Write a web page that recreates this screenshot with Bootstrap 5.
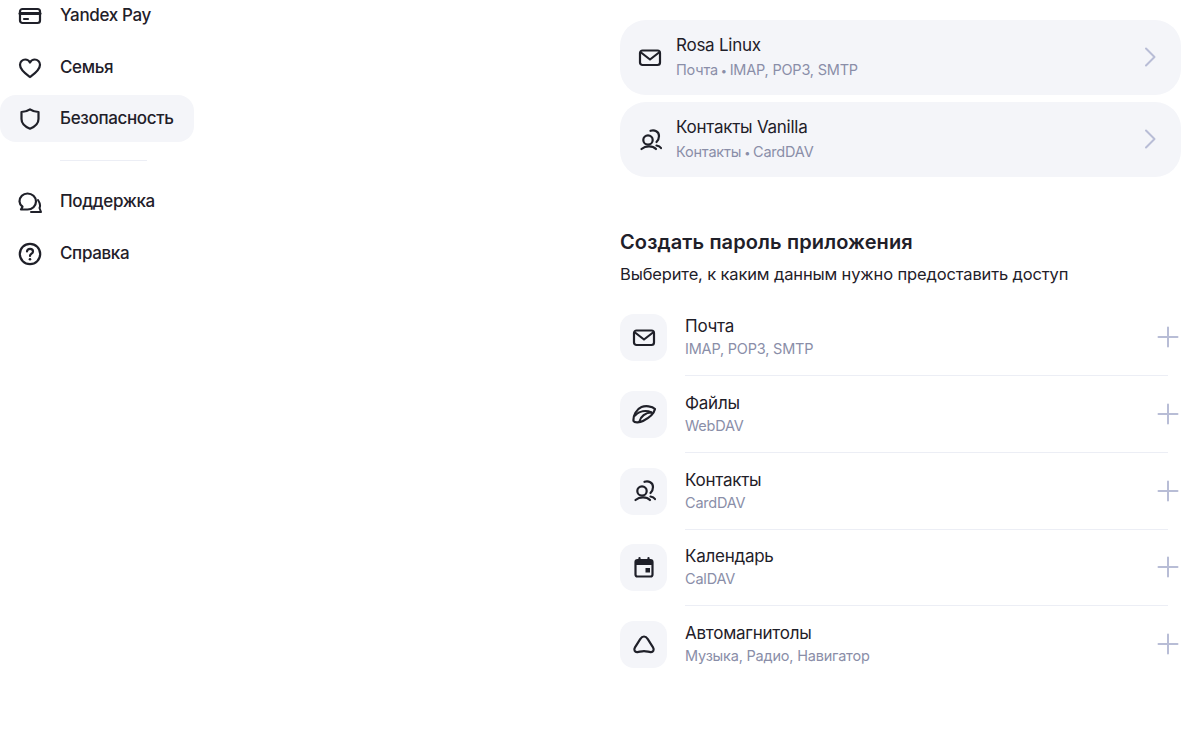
<!DOCTYPE html>
<html lang="ru">
<head>
  <meta charset="UTF-8" />
  <meta name="viewport" content="width=device-width, initial-scale=1.0"/>
  <title>Безопасность</title>
  <link href="https://cdn.jsdelivr.net/npm/bootstrap@5.3.0/dist/css/bootstrap.min.css" rel="stylesheet" />
  <style>
    html, body {
      height: 744px;
      overflow: hidden;
    }
    body {
      background-color: #fff;
      color: #1f2029;
      font-family: "Inter", "Noto Sans", sans-serif;
      letter-spacing: -0.2px;
    }
    svg {
      display: block;
      flex-shrink: 0;
      fill: none;
      stroke: #1f2029;
      stroke-width: 2.2;
      stroke-linecap: round;
      stroke-linejoin: round;
    }
    .side-col {
      width: 194px;
      margin-top: -8px;
    }
    .main-col {
      width: 561px;
      margin-left: 426px;
      padding-top: 20px;
    }
    .side-item {
      height: 47px;
      margin-bottom: 5px;
      padding-left: 18px;
      gap: 18px;
      font-size: 17px;
      font-weight: 500;
      letter-spacing: -0.35px;
      width: 100%;
    }
    .side-item.current {
      margin-top: -1px;
      background-color: #f4f5f9;
      border-radius: 16px;
    }
    .side-sep {
      width: 87px;
      height: 1px;
      margin: 18px 0 17px 60px;
      background-color: #eceef5;
    }
    .pass-card {
      height: 75px;
      margin-bottom: 7px;
      padding: 0 24px 0 18px;
      gap: 14px;
      background-color: #f4f5f9;
      border-radius: 26px;
    }
    .pass-title {
      font-size: 17px;
      line-height: 24px;
      letter-spacing: -0.25px;
    }
    .pass-sub {
      font-size: 14.5px;
      line-height: 20px;
      color: #8a8ea8;
      letter-spacing: -0.2px;
    }
    .pass-card .pass-title {
      margin-top: -2px;
      margin-bottom: 3px;
    }
    .sub-dot {
      font-size: 11px;
      margin: 0 -1px;
    }
    .section-title {
      font-size: 20px;
      font-weight: 600;
      line-height: 28px;
      letter-spacing: 0.12px;
      margin: 51px 0 6px;
    }
    .section-text {
      font-size: 16.5px;
      line-height: 24px;
      letter-spacing: -0.14px;
      margin-bottom: 28px;
    }
    .app-row {
      height: 76.75px;
      gap: 18px;
    }
    .app-tile {
      width: 47px;
      height: 47px;
      background-color: #f4f5f9;
      border-radius: 14px;
    }
    .app-body {
      height: 62px;
      margin-right: 13px;
      border-bottom: 1px solid #eceef5;
    }
    .app-body .pass-title {
      margin-bottom: 1px;
    }
    .app-row:last-child .app-body {
      border-bottom: 0;
    }
    .app-plus {
      position: absolute;
      right: -10.5px;
      top: 12px;
    }
    .app-plus svg, .chev {
      stroke: #b8bdd6;
      stroke-width: 2;
    }
    .chev {
      margin-top: -2px;
    }
  </style>
</head>
<body>

<div class="d-flex">

  <!-- Sidebar -->
  <div class="side-col">
    <div class="side-item d-flex align-items-center">
      <svg width="24" height="24" viewBox="0 0 24 24"><rect x="2" y="5" width="20" height="14" rx="2.5"/><path d="M2 9.500h20" stroke-width="3"/><path d="M6 15h4"/></svg>
      <span>Yandex Pay</span>
    </div>
    <div class="side-item d-flex align-items-center">
      <svg width="24" height="24" viewBox="0 0 24 24"><path d="M12 21c-1-.9-10-6.500-10-12.300C2 5.700 4.500 3.500 7.200 3.500c2 0 3.800 1 4.800 3 1-2 2.800-3 4.800-3C19.500 3.500 22 5.700 22 8.700 22 14.500 13 20.100 12 21z"/></svg>
      <span>Семья</span>
    </div>
    <div class="side-item current d-flex align-items-center">
      <svg width="24" height="24" viewBox="0 0 24 24"><path d="M12 2.300c2.500 1.700 5.300 2.600 8.500 2.700v7c0 4.500-3.500 7.700-8.500 9.700-5-2-8.500-5.200-8.500-9.700V5c3.200-.1 6-1 8.500-2.700z"/></svg>
      <span>Безопасность</span>
    </div>
    <div class="side-sep"></div>
    <div class="side-item d-flex align-items-center">
      <svg width="24" height="24" viewBox="0 0 24 24"><path d="M9.500 3.500c4.700 0 8.500 3.500 8.500 8s-3.800 8-8.500 8H3l1.500-2.800C2.500 15 1.500 13.500 1.500 11.500c0-4.500 3.500-8 8-8z"/><path d="M20 10c2 3 2.500 6 1.500 8l1.500 4H13" stroke-width="2"/></svg>
      <span>Поддержка</span>
    </div>
    <div class="side-item d-flex align-items-center">
      <svg width="24" height="24" viewBox="0 0 24 24"><circle cx="12" cy="12" r="10.200"/><path d="M9 9.500C9 7.800 10.300 6.800 12 6.800s3 1 3 2.600c0 2.300-3 2.300-3 4.600"/><path d="M12 17.200v.1" stroke-width="2.600"/></svg>
      <span>Справка</span>
    </div>
  </div>

  <!-- Main column -->
  <div class="main-col">

    <div class="pass-card d-flex align-items-center">
      <svg width="24" height="24" viewBox="0 0 24 24"><rect x="2" y="4.500" width="20" height="14.500" rx="2.500"/><path d="M3 6.500l9 7L21 6.500"/></svg>
      <div class="flex-grow-1">
        <div class="pass-title">Rosa Linux</div>
        <div class="pass-sub">Почта <span class="sub-dot">•</span> IMAP, POP3, SMTP</div>
      </div>
      <svg class="chev" width="14" height="22" viewBox="0 0 14 22"><path d="M3 2.500l8.500 8.500L3 19.500"/></svg>
    </div>

    <div class="pass-card d-flex align-items-center">
      <svg width="24" height="24" viewBox="0 0 24 24"><circle cx="10" cy="12" r="4.700"/><path d="M12.500 2.800C16.500 1.500 21 3.500 21 8c0 2.500-1 4.500-2.500 6"/><path d="M3.500 21C6 18.800 8.500 18.300 11 18.300s5 .5 7 2.700"/><path d="M18.500 17.500c2 .3 3.500 1 4.500 2.500"/></svg>
      <div class="flex-grow-1">
        <div class="pass-title">Контакты Vanilla</div>
        <div class="pass-sub">Контакты <span class="sub-dot">•</span> CardDAV</div>
      </div>
      <svg class="chev" width="14" height="22" viewBox="0 0 14 22"><path d="M3 2.500l8.500 8.500L3 19.500"/></svg>
    </div>

    <div class="section-title">Создать пароль приложения</div>
    <div class="section-text">Выберите, к каким данным нужно предоставить доступ</div>

    <div class="app-list">
      <div class="app-row d-flex">
        <div class="app-tile d-flex align-items-center justify-content-center">
          <svg width="24" height="24" viewBox="0 0 24 24"><rect x="2" y="4.500" width="20" height="14.500" rx="2.500"/><path d="M3 6.500l9 7L21 6.500"/></svg>
        </div>
        <div class="app-body flex-grow-1 position-relative">
          <div class="pass-title">Почта</div>
          <div class="pass-sub">IMAP, POP3, SMTP</div>
          <div class="app-plus"><svg width="22" height="22" viewBox="0 0 22 22"><path d="M11 1.500v19M1.500 11h19"/></svg></div>
        </div>
      </div>
      <div class="app-row d-flex">
        <div class="app-tile d-flex align-items-center justify-content-center">
          <svg width="24" height="24" viewBox="0 0 24 24"><path d="M1.500 19C1 13.500 4.500 7 9.500 5c4-1.500 10.500-1 13.500 2-1 5-6 9-12 12-3 1.500-8.500 2-9.500 0z"/><path d="M3 13.500C7.500 9 14 8 19.500 10.500"/><path d="M7.500 19.500c1-5 6-9 12-9"/></svg>
        </div>
        <div class="app-body flex-grow-1 position-relative">
          <div class="pass-title">Файлы</div>
          <div class="pass-sub">WebDAV</div>
          <div class="app-plus"><svg width="22" height="22" viewBox="0 0 22 22"><path d="M11 1.500v19M1.500 11h19"/></svg></div>
        </div>
      </div>
      <div class="app-row d-flex">
        <div class="app-tile d-flex align-items-center justify-content-center">
          <svg width="24" height="24" viewBox="0 0 24 24"><circle cx="10" cy="12" r="4.700"/><path d="M12.500 2.800C16.500 1.500 21 3.500 21 8c0 2.500-1 4.500-2.500 6"/><path d="M3.500 21C6 18.800 8.500 18.300 11 18.300s5 .5 7 2.700"/><path d="M18.500 17.500c2 .3 3.500 1 4.500 2.500"/></svg>
        </div>
        <div class="app-body flex-grow-1 position-relative">
          <div class="pass-title">Контакты</div>
          <div class="pass-sub">CardDAV</div>
          <div class="app-plus"><svg width="22" height="22" viewBox="0 0 22 22"><path d="M11 1.500v19M1.500 11h19"/></svg></div>
        </div>
      </div>
      <div class="app-row d-flex">
        <div class="app-tile d-flex align-items-center justify-content-center">
          <svg width="24" height="24" viewBox="0 0 24 24"><rect x="3.500" y="4" width="17" height="16.500" rx="2"/><path d="M3.500 6.500h17" stroke-width="5" stroke-linecap="butt"/><path d="M7.500 2v3M16.500 2v3"/><rect x="13.500" y="12" width="4.500" height="4.500" fill="#1f2029" stroke="none"/></svg>
        </div>
        <div class="app-body flex-grow-1 position-relative">
          <div class="pass-title">Календарь</div>
          <div class="pass-sub">CalDAV</div>
          <div class="app-plus"><svg width="22" height="22" viewBox="0 0 22 22"><path d="M11 1.500v19M1.500 11h19"/></svg></div>
        </div>
      </div>
      <div class="app-row d-flex">
        <div class="app-tile d-flex align-items-center justify-content-center">
          <svg width="24" height="24" viewBox="0 0 24 24"><path d="M12 3.500c1.700 0 2.800 1.100 3.800 2.700l5.200 8.200c1.600 2.600.2 5-2.500 4.700-2.300-.3-4.200-1-6.500-1s-4.200.7-6.500 1c-2.700.3-4.100-2.100-2.500-4.700l5.200-8.200C9.200 4.600 10.300 3.500 12 3.500z"/></svg>
        </div>
        <div class="app-body flex-grow-1 position-relative">
          <div class="pass-title">Автомагнитолы</div>
          <div class="pass-sub">Музыка, Радио, Навигатор</div>
          <div class="app-plus"><svg width="22" height="22" viewBox="0 0 22 22"><path d="M11 1.500v19M1.500 11h19"/></svg></div>
        </div>
      </div>
    </div>

  </div>
</div>

<script src="https://cdn.jsdelivr.net/npm/bootstrap@5.3.0/dist/js/bootstrap.bundle.min.js"></script>
</body>
</html>
